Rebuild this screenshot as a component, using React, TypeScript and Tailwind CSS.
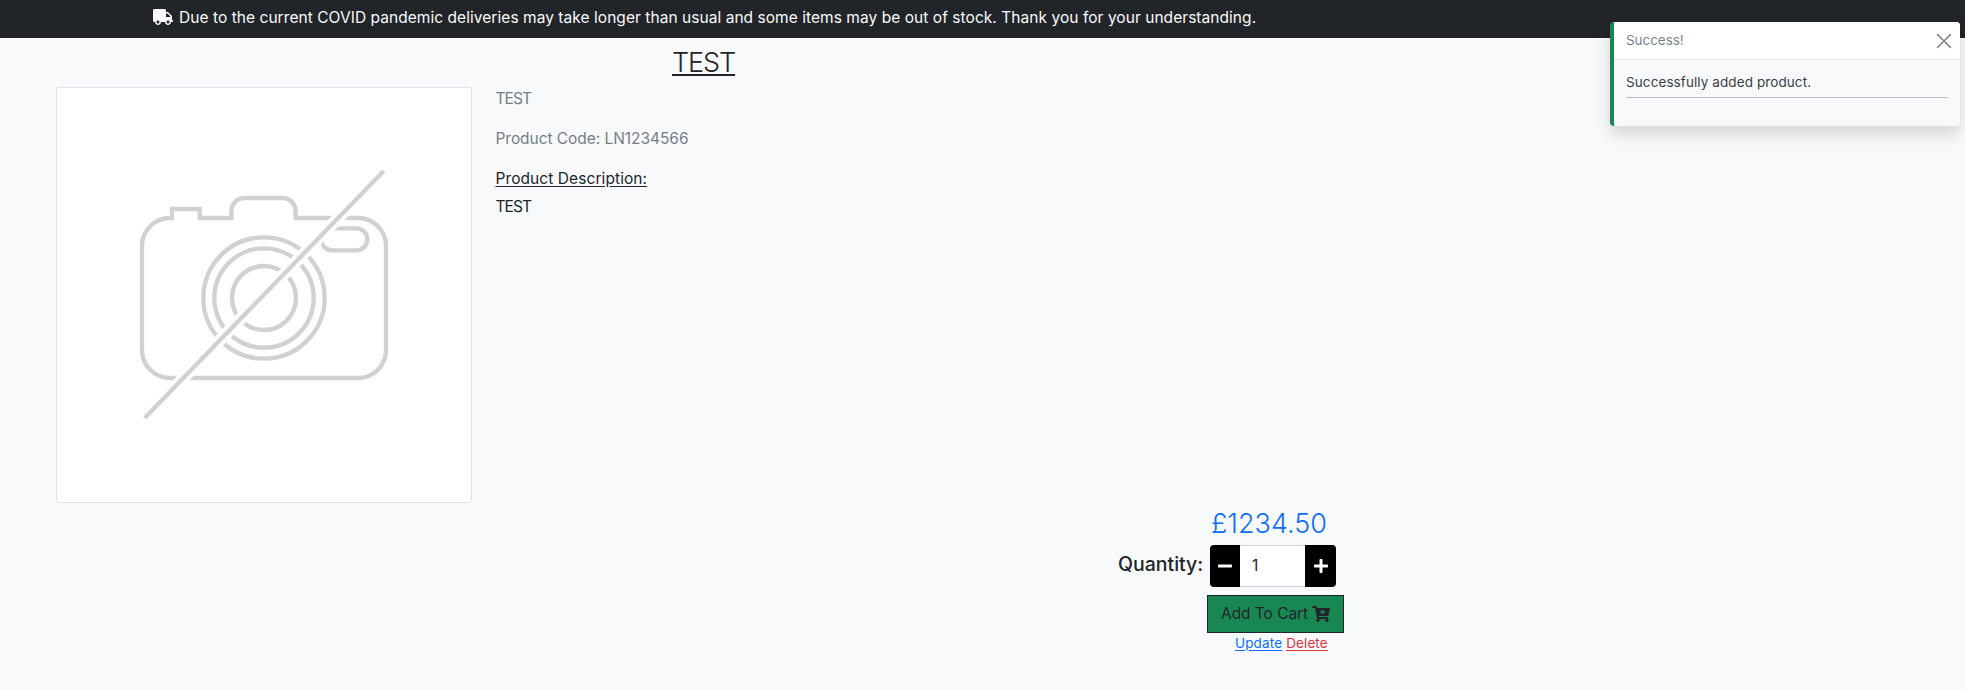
import { FaCartPlus, FaMinus, FaPlus, FaTruck } from "react-icons/fa";

function Toast() {
  return (
    <div className="absolute top-[22px] right-[5px] h-[104px] w-[350px] overflow-visible rounded-[4px] shadow-[0_8px_16px_rgba(0,0,0,0.15)]">
      <div className="flex h-full flex-col overflow-hidden rounded-[4px] border-l-4 border-[#198754] bg-[#f8f9fb]">
        <div className="flex h-[38px] shrink-0 items-center justify-between border-b border-b-[#e5e7e9] bg-white pr-[8px] pl-3">
          <span className="text-[13.5px] leading-[21px] tracking-[-0.05px] text-[#7a838b]">Success!</span>
          <svg viewBox="0 0 16 16" className="h-4 w-4" fill="none" stroke="#808080" strokeWidth="1.6" strokeLinecap="round">
            <path d="M1.5 1.5l13 13M14.5 1.5l-13 13" />
          </svg>
        </div>
        <div className="px-3 pt-3">
          <p className="text-[13.5px] leading-[21px] tracking-[0.09px] text-[#3c4044]">Successfully added product.</p>
          <hr className="mt-[4px] border-t border-[#bcbec1]" />
        </div>
      </div>
    </div>
  );
}

function NoImage() {
  return (
    <div className="h-[416px] w-[416px] shrink-0 rounded-[3px] border border-[#dee2e6] bg-white">
      <svg viewBox="21 24 1242 1242" className="h-full w-full" fill="none" stroke="#d1d1d1" strokeWidth="13">
        <path d="M372 414H360A84 84 0 0 0 276 498V810A84 84 0 0 0 360 894H925A84 84 0 0 0 1008 810V498A84 84 0 0 0 925 414H737V394A39 39 0 0 0 698 354H583A39 39 0 0 0 544 394V414H449V387H366V420" />
        <circle cx="642" cy="654" r="182" />
        <circle cx="642" cy="654" r="149" />
        <circle cx="642" cy="654" r="96" />
        <rect x="814" y="445" width="138" height="66" rx="33" />
        <path d="M286 1012L999 275" stroke="#fff" strokeWidth="36" />
        <path d="M284 1014L1001 273" />
      </svg>
    </div>
  );
}

export default function App() {
  return (
    <div className="relative h-[690px] w-[1965px] overflow-hidden bg-[#f8f9fb] font-[Inter,sans-serif] font-normal text-[#212529]">
      <header className="flex h-[38px] items-start bg-[#212529] pt-[6px] pl-[153px] text-[#f8f9fa]">
        <FaTruck className="mt-[3px] h-4 w-5" />
        <p className="ml-[6px] text-[15.5px] leading-6 tracking-[0.05px] whitespace-nowrap">
          Due to the current COVID pandemic deliveries may take longer than usual and some items may be out of stock. Thank you for your understanding.
        </p>
      </header>

      <h1 className="mt-[8px] ml-[672px] w-fit text-[27px] leading-[34px] font-light tracking-[-1.1px] underline decoration-2 underline-offset-[2px]">TEST</h1>

      <section className="mt-[7px] ml-[56px] flex">
        <NoImage />
        <div className="ml-[23.5px] text-[15.5px] leading-6">
          <p className="tracking-[-0.9px] text-[#767f87]">TEST</p>
          <p className="mt-4 tracking-[-0.05px] text-[#767f87]">Product Code: LN1234566</p>
          <p className="mt-4 w-fit tracking-[0.08px] underline underline-offset-2">Product Description:</p>
          <p className="mt-1 tracking-[-0.9px]">TEST</p>
        </div>
      </section>

      <section className="ml-[1117px] flex w-[240px] flex-col pt-[4px]">
        <p className="ml-[94px] text-[27px] leading-[34px] font-light text-[#0d6efd]">£1234.50</p>
        <div className="mt-[4px] flex h-[42px]">
          <label className="mt-[4px] w-[93px] pl-px text-[19.5px] leading-[30px] font-medium">Quantity:</label>
          <button className="flex w-[30px] items-center justify-center rounded-l-[4px] bg-black text-white">
            <FaMinus className="h-4 w-[14px]" />
          </button>
          <div className="flex w-[65px] items-center border-y border-[#ced4da] bg-white pl-[12px] text-[15.5px]">1</div>
          <button className="flex w-[31px] items-center justify-center rounded-r-[4px] bg-black text-white">
            <FaPlus className="h-4 w-[14px]" />
          </button>
        </div>
        <button className="mt-2 ml-[90px] flex h-[38px] w-[137px] items-center border border-[#212529] bg-[#198754] pl-[13px] text-[15.5px] tracking-[-0.05px] whitespace-nowrap">
          Add To Cart
          <FaCartPlus className="ml-[4px] h-4 w-[18px]" />
        </button>
        <div className="ml-[118px] flex gap-[4px] text-[13.5px] leading-[21px] underline underline-offset-2">
          <a className="tracking-[0.15px] text-[#0d6efd]">Update</a>
          <a className="tracking-[0.1px] text-[#dc3545]">Delete</a>
        </div>
      </section>

      <Toast />
    </div>
  );
}
